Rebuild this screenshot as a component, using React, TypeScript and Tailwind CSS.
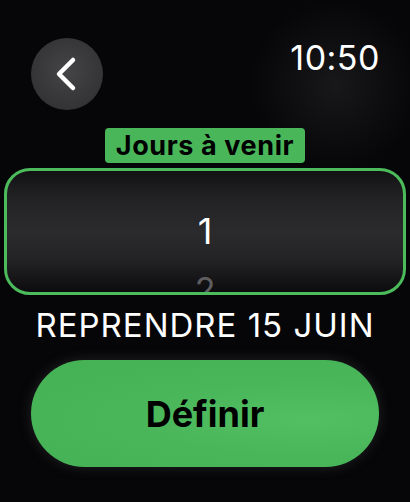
import React from "react";

function Chevron() {
  return (
    <svg width="24" height="36" viewBox="0 0 24 36" fill="none">
      <path
        d="M19 4 L5 18 L19 32"
        stroke="white"
        strokeWidth="4.5"
        strokeLinecap="round"
        strokeLinejoin="round"
      />
    </svg>
  );
}

export default function App() {
  return (
    <div className="w-[410px] h-[502px] bg-[#050507] text-white font-['Inter',sans-serif] flex flex-col overflow-hidden bg-[radial-gradient(circle_at_335px_85px,#18181b_0,#060608_85px)]">
      {/* top bar */}
      <div className="flex justify-between items-start pl-[31px] pr-[30px] pt-[38px] h-[128px]">
        <button className="w-[72px] h-[72px] rounded-full flex items-center justify-center bg-[radial-gradient(circle_at_50%_45%,#454547_0%,#363638_60%,#2e2e30_100%)]">
          <span className="ml-[-3px] flex">
            <Chevron />
          </span>
        </button>
        <span className="text-[34px] leading-none mt-[3px] tracking-[0.5px]">10:50</span>
      </div>

      {/* label */}
      <div className="flex justify-center">
        <span className="bg-[#4ab65a] text-black font-bold text-[27px] tracking-[0.6px] leading-[35px] px-[11px] rounded-[4px] h-[35px]">
          Jours à venir
        </span>
      </div>

      {/* picker */}
      <div className="mx-[4px] mt-[5px] h-[127px] rounded-[26px] border-[3px] border-[#4cbb5c] overflow-hidden bg-[linear-gradient(to_bottom,#121214_0%,#222224_22%,#2b2b2d_50%,#242426_72%,#0c0c0e_100%)] flex flex-col items-center">
        <div className="mt-[38px] text-[36px] leading-[44px]">1</div>
        <div className="mt-[30px] text-[34px] leading-[14px] h-[14px] text-[#5e5e60]">2</div>
      </div>

      {/* resume date */}
      <div className="flex justify-center mt-[10px]">
        <span className="text-[33px] tracking-[1px] leading-[40px]">REPRENDRE 15 JUIN</span>
      </div>

      {/* action */}
      <div className="px-[31px] mt-[15px]">
        <button className="w-full h-[107px] rounded-full bg-[#48b558] bg-[radial-gradient(ellipse_at_80%_55%,#52c062_0%,#49b659_45%,#45b155_100%)] text-black font-bold text-[36px] flex items-center justify-center shadow-[0_0_14px_rgba(120,120,130,0.25)]">
          Définir
        </button>
      </div>
    </div>
  );
}
